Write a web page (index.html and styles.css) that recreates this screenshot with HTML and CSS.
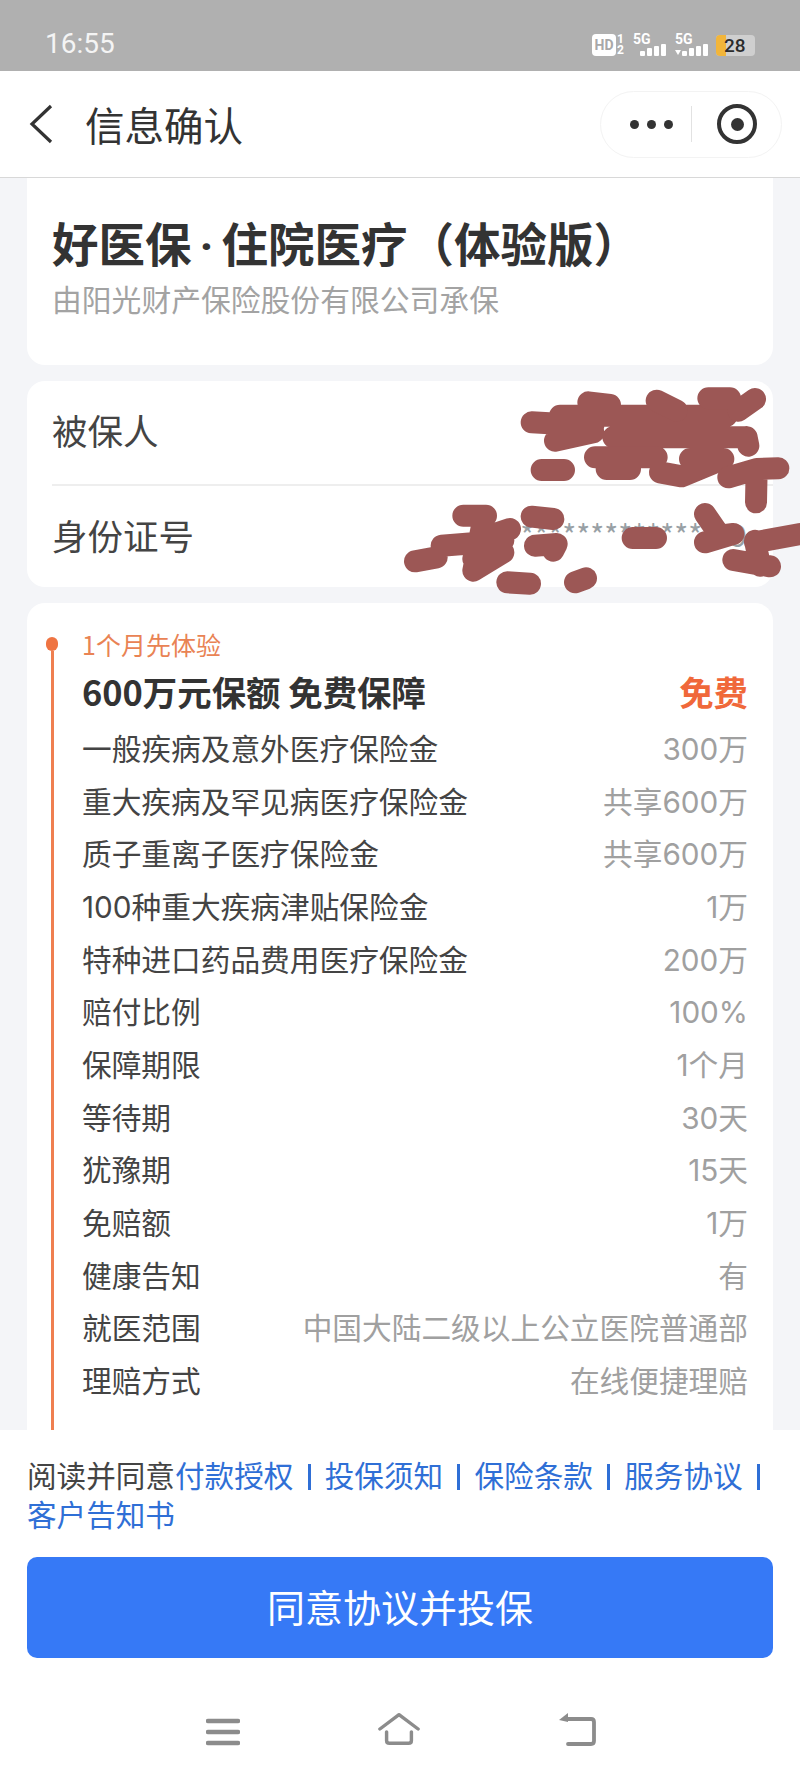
FILE: index.html
```html
<!DOCTYPE html>
<html lang="zh-CN">
<head>
    <meta charset="UTF-8">
    <meta name="viewport" content="width=device-width, initial-scale=1.0">
    <title>信息确认</title>
    <link rel="stylesheet" href="styles.css">
</head>
<body>
    <div class="status-bar">
        <span class="status-time">16:55</span>
        <div class="status-icons">
            <span class="hd-badge">HD</span>
            <span class="sim-nums"><span>1</span><span>2</span></span>
            <div class="signal">
                <span class="signal-label">5G</span>
                <div class="bars"><i class="b1"></i><i class="b2"></i><i class="b3"></i><i class="b4"></i></div>
            </div>
            <div class="signal">
                <span class="signal-label">5G</span>
                <span class="arrows"></span>
                <div class="bars"><i class="b1"></i><i class="b2"></i><i class="b3"></i><i class="b4"></i></div>
            </div>
            <div class="battery"><span class="battery-level"></span><span class="battery-num">28</span></div>
        </div>
    </div>

    <header class="nav-bar">
        <svg class="back-icon" width="26" height="40" viewBox="0 0 26 40"><path d="M23 2 L4 20 L23 38" fill="none" stroke="#333" stroke-width="3.2"/></svg>
        <h1 class="nav-title">信息确认</h1>
        <div class="capsule">
            <div class="capsule-dots"><i></i><i></i><i></i></div>
            <span class="capsule-line"></span>
            <div class="capsule-target"><i></i></div>
        </div>
    </header>

    <main class="content">
        <section class="card product-card">
            <h2 class="product-title">好医保<span class="title-dot">·</span>住院医疗（体验版）</h2>
            <p class="product-sub">由阳光财产保险股份有限公司承保</p>
        </section>

        <section class="card person-card">
            <div class="person-row">
                <span>被保人</span>
            </div>
            <div class="person-row">
                <span>身份证号</span>
                <span class="person-id">***************9</span>
            </div>
            <!-- scribble over the private data -->
            <svg class="scribble" width="420" height="240" viewBox="0 0 1260 720">
                <g fill="none" stroke="#9c5755" stroke-width="66" stroke-linecap="round" stroke-linejoin="round">
                    <path d="M455 160 L640 170 M525 215 L640 190 M625 100 L690 108 M540 140 L1040 140 M700 205 L1100 205 M1100 205 L1105 230"/>
                    <path d="M645 265 L830 265 M680 300 L750 300 M840 310 L905 322 L1030 270 M930 270 L1030 270"/>
                    <path d="M830 95 L890 125 M985 88 L1050 88 M1125 90 L1075 125 M485 303 L552 303"/>
                    <path d="M1045 325 L1130 300 L1195 298 M1130 300 L1128 400"/>
                    <path d="M105 577 L170 565 M185 530 L370 515 M250 440 L318 440 M310 450 L280 605 L370 550 M300 510 L390 480 M280 570 L340 530"/>
                    <path d="M455 443 L520 450 M465 530 L530 525 L520 545 M382 640 L450 644 M585 640 L618 628 M758 507 L828 507"/>
                    <path d="M975 435 L1020 500 L1060 495 M975 520 L1060 495 M1060 573 L1170 592 M1125 515 L1140 590 M1125 520 L1260 495"/>
                </g>
            </svg>
        </section>

        <section class="card plan-card">
            <div class="rail"><span class="rail-dot"></span><span class="rail-line"></span></div>
            <div class="plan-body">
                <div class="plan-tag">1个月先体验</div>
                <div class="plan-head">
                    <span>600万元保额 免费保障</span>
                    <span class="plan-price">免费</span>
                </div>
                <ul class="plan-list">
                    <li><span>一般疾病及意外医疗保险金</span><span class="val">300万</span></li>
                    <li><span>重大疾病及罕见病医疗保险金</span><span class="val">共享600万</span></li>
                    <li><span>质子重离子医疗保险金</span><span class="val">共享600万</span></li>
                    <li><span>100种重大疾病津贴保险金</span><span class="val">1万</span></li>
                    <li><span>特种进口药品费用医疗保险金</span><span class="val">200万</span></li>
                    <li><span>赔付比例</span><span class="val">100%</span></li>
                    <li><span>保障期限</span><span class="val">1个月</span></li>
                    <li><span>等待期</span><span class="val">30天</span></li>
                    <li><span>犹豫期</span><span class="val">15天</span></li>
                    <li><span>免赔额</span><span class="val">1万</span></li>
                    <li><span>健康告知</span><span class="val">有</span></li>
                    <li><span>就医范围</span><span class="val">中国大陆二级以上公立医院普通部</span></li>
                    <li><span>理赔方式</span><span class="val">在线便捷理赔</span></li>
                </ul>
            </div>
        </section>
    </main>

    <footer class="footer">
        <p class="agree">阅读并同意<a>付款授权</a><i class="sep"></i><a>投保须知</a><i class="sep"></i><a>保险条款</a><i class="sep"></i><a>服务协议</a><i class="sep"></i><br><a>客户告知书</a></p>
        <button class="submit-btn" type="button">同意协议并投保</button>
        <div class="sys-nav">
            <svg width="34" height="28" viewBox="0 0 34 28"><path d="M2 3 H32 M2 14 H32 M2 25 H32" stroke="#8c8c8c" stroke-width="4.4" stroke-linecap="round"/></svg>
            <svg width="42" height="34" viewBox="0 0 44 34"><path d="M2 17 L22 2 L42 17" fill="none" stroke="#8c8c8c" stroke-width="3.6" stroke-linecap="round" stroke-linejoin="round"/><path d="M9 20 V29 Q9 32 12 32 H32 Q35 32 35 29 V20" fill="none" stroke="#8c8c8c" stroke-width="3.6" stroke-linecap="round"/></svg>
            <svg width="38" height="34" viewBox="0 0 38 34"><path d="M9 7 H33 Q36 7 36 10 V29 Q36 32 33 32 H10" fill="none" stroke="#8c8c8c" stroke-width="3.8" stroke-linecap="round"/><path d="M10 1 L1 8 L10 10 Z" fill="#8c8c8c"/></svg>
        </div>
    </footer>
</body>
</html>
```

FILE: styles.css
```css
/* General page styling */
* {
    box-sizing: border-box;
}

html, body {
    height: 100%;
}

body {
    margin: 0;
    height: 1778px;
    overflow: hidden;
    display: flex;
    flex-direction: column;
    background-color: #f4f5f8;
    color: #333;
    font-family: "Noto Sans CJK SC", "Noto Sans", sans-serif;
}

/* Status bar */
.status-bar {
    height: 71px;
    flex: none;
    display: flex;
    justify-content: space-between;
    align-items: center;
    padding: 16px 45px 0 45px;
    background-color: #b0b0b0;
}

.status-time {
    font-family: Roboto, sans-serif;
    font-size: 28px;
    color: #f4f4f4;
}

.status-icons {
    display: flex;
    align-items: flex-end;
    height: 24px;
    color: #fff;
    font-family: Roboto, sans-serif;
}

.hd-badge {
    width: 24px;
    height: 22px;
    border-radius: 4px;
    background-color: #fff;
    color: #a8a8a8;
    font-size: 14px;
    font-weight: 700;
    line-height: 22px;
    text-align: center;
}

.sim-nums {
    display: flex;
    flex-direction: column;
    margin-left: 1px;
    width: 7px;
    font-size: 12px;
    font-weight: 700;
    line-height: 11px;
}

.signal {
    position: relative;
    width: 33px;
    height: 22px;
    display: flex;
    justify-content: flex-end;
    align-items: flex-end;
    margin-left: 9px;
}

.signal-label {
    position: absolute;
    left: 0;
    top: -2px;
    font-size: 14px;
    font-weight: 700;
    line-height: 14px;
}

.arrows {
    position: absolute;
    left: 0;
    bottom: 1px;
    width: 0;
    height: 0;
    border-left: 3.5px solid transparent;
    border-right: 3.5px solid transparent;
    border-top: 5px solid #fff;
}

.bars {
    display: flex;
    align-items: flex-end;
    gap: 2px;
}

.bars i {
    width: 5px;
    background-color: #fff;
    border-radius: 1px;
}

.bars .b1 { height: 5px; }
.bars .b2 { height: 8px; }
.bars .b3 { height: 10px; }
.bars .b4 { height: 12px; }

.battery {
    position: relative;
    width: 39px;
    height: 21px;
    margin-left: 8px;
    border-radius: 4px;
    background-color: #cfcfcf;
    overflow: hidden;
}

.battery-level {
    display: block;
    width: 10px;
    height: 100%;
    background-color: #f2b53a;
}

.battery-num {
    position: absolute;
    left: 8px;
    top: 0;
    color: #2b2b2b;
    font-size: 19px;
    font-weight: 500;
    line-height: 21px;
}

/* Top navigation */
.nav-bar {
    height: 107px;
    flex: none;
    display: flex;
    align-items: center;
    padding: 0 18px 0 28px;
    background-color: #fff;
    border-bottom: 1px solid #d8d8d8;
}

.nav-title {
    margin: 0 0 0 31px;
    flex: 1;
    color: #333;
    font-size: 39.5px;
    font-weight: 400;
    line-height: 50px;
}

.capsule {
    width: 182px;
    height: 67px;
    display: flex;
    align-items: center;
    border: 1px solid #f3f3f3;
    border-radius: 34px;
}

.capsule-dots {
    display: flex;
    gap: 8px;
    margin-left: 29px;
}

.capsule-dots i {
    width: 9px;
    height: 9px;
    border-radius: 50%;
    background-color: #333;
}

.capsule-line {
    width: 1px;
    height: 36px;
    margin-left: 18px;
    background-color: #e2e2e2;
}

.capsule-target {
    width: 40px;
    height: 40px;
    margin-left: 25px;
    display: flex;
    justify-content: center;
    align-items: center;
    border: 4px solid #333;
    border-radius: 50%;
}

.capsule-target i {
    width: 13px;
    height: 13px;
    border-radius: 50%;
    background-color: #333;
}

.content {
    flex: 1;
    min-height: 0;
    overflow: hidden;
    padding: 0 27px;
    display: flex;
    flex-direction: column;
    gap: 16px;
}

.card {
    flex: none;
    background-color: #fff;
    border-radius: 18px;
}

.product-card {
    height: 187px;
    padding: 35px 25px 0;
    border-radius: 0 0 18px 18px;
}

.product-title {
    height: 58px;
    margin: 0;
    font-size: 46.5px;
    font-weight: 700;
    line-height: 58px;
    white-space: nowrap;
}

.title-dot {
    display: inline-block;
    width: 30px;
    font-family: Roboto, sans-serif;
    line-height: 1;
    text-align: center;
}

.product-sub {
    margin: 7px 0 0;
    color: #a3a3a3;
    font-size: 29.8px;
    line-height: 40px;
}

.person-card {
    position: relative;
    padding-left: 25px;
}

.person-row {
    height: 103px;
    display: flex;
    justify-content: space-between;
    align-items: center;
    padding: 0 26px 7px 0;
    color: #444;
    font-size: 35.5px;
}

.person-row + .person-row {
    padding-bottom: 5px;
    border-top: 2px solid #eeeeee;
}

.person-id {
    color: #98a0a5;
    font-size: 30px;
}

.scribble {
    position: absolute;
    left: 353px;
    top: -12px;
    overflow: visible;
}

.plan-card {
    display: flex;
    height: 900px;
    padding-left: 19px;
}

.rail {
    width: 12px;
    flex: none;
    display: flex;
    flex-direction: column;
    align-items: center;
    padding-top: 34px;
}

.rail-dot {
    width: 12px;
    height: 14px;
    flex: none;
    border-radius: 6px;
    background-color: #ef7442;
}

.rail-line {
    width: 3px;
    flex: 1;
    background-color: #ef7f50;
}

.plan-body {
    flex: 1;
    padding: 23px 25px 0 24px;
}

.plan-tag {
    color: #e98354;
    font-size: 25px;
    line-height: 36px;
}

.plan-head {
    display: flex;
    justify-content: space-between;
    align-items: center;
    margin-top: 7px;
    color: #333;
    font-size: 34.4px;
    font-weight: 700;
    line-height: 44px;
}

.plan-price {
    color: #f0683a;
}

.plan-list {
    list-style: none;
    margin: 10px 0 0;
    padding: 0;
    font-family: Inter, "Noto Sans CJK SC", sans-serif;
}

.plan-list li {
    display: flex;
    justify-content: space-between;
    color: #444;
    font-size: 29.7px;
    line-height: 52.67px;
}

.plan-list .val {
    color: #a0a0a0;
}

/* Bottom bar */
.footer {
    height: 348px;
    flex: none;
    padding: 25px 27px 0;
    background-color: #fff;
    position: relative;
}

.agree {
    margin: 0;
    color: #444;
    font-size: 29.6px;
    line-height: 39px;
    white-space: nowrap;
}

.agree a {
    color: #2f6fd6;
}

.agree .sep {
    display: inline-block;
    width: 3px;
    height: 26px;
    margin: 0 14.2px;
    vertical-align: -3px;
    background-color: #2f6fd6;
}

.submit-btn {
    display: block;
    width: 100%;
    height: 101px;
    margin-top: 24px;
    padding: 0 0 4px;
    border: none;
    border-radius: 10px;
    background-color: #3679f6;
    color: #fff;
    font-family: inherit;
    font-size: 38px;
    font-weight: 400;
    cursor: pointer;
}

.sys-nav {
    display: flex;
    justify-content: space-between;
    align-items: flex-end;
    width: 390px;
    margin: 54px 0 0 179px;
}
```
